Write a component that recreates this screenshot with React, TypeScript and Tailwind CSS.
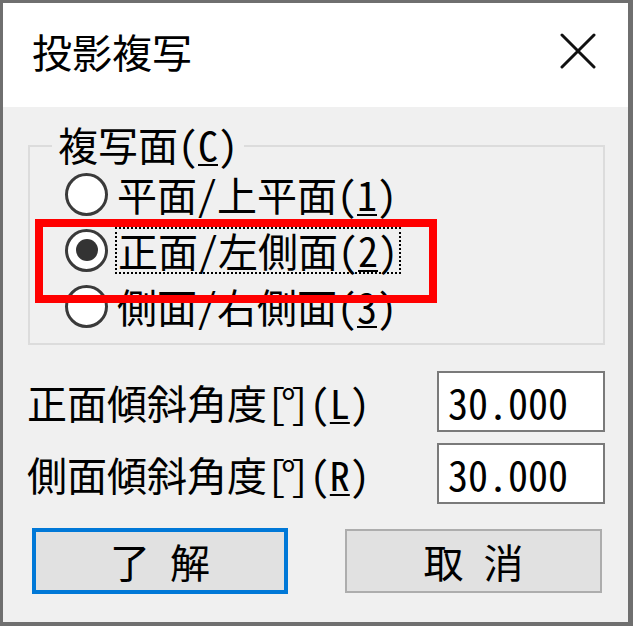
import React from "react";

const font = "font-['Noto_Sans_CJK_JP',sans-serif] [font-feature-settings:'hwid']";

function Radio({ checked }: { checked?: boolean }) {
    return (
        <span className="flex h-[43px] w-[43px] shrink-0 items-center justify-center rounded-full border-[3px] border-[#3a3a3a] bg-white">
            {checked && <span className="h-[22px] w-[22px] rounded-full bg-[#333333]" />}
        </span>
    );
}

function RadioRow({ label, keyChar, checked }: { label: string; keyChar: string; checked?: boolean }) {
    const text = (
        <>
            {label}(<span className="underline decoration-2 underline-offset-[3px]">{keyChar}</span>)
        </>
    );
    return (
        <div className="flex h-[56px] items-center pl-[35px]">
            <Radio checked={checked} />
            {checked ? (
                <span className="ml-[7px] border-2 border-dotted border-black px-[1px] leading-[43px]">{text}</span>
            ) : (
                <span className="ml-[9px] leading-[40px]">{text}</span>
            )}
        </div>
    );
}

function AngleRow({ label, keyChar, value }: { label: string; keyChar: string; value: string }) {
    return (
        <div className="flex h-[61px] items-center">
            <span className="leading-[40px]">
                {label}
                <span className="tracking-[-6px]">[°]</span>
                <span className="ml-[6px]">
                    (<span className="underline decoration-2 underline-offset-[3px]">{keyChar}</span>)
                </span>
            </span>
            <div className="ml-auto flex h-[61px] w-[168px] items-center border-2 border-[#7a7a7a] bg-white pl-[9px] leading-[40px]">
                {value}
            </div>
        </div>
    );
}

export default function App() {
    return (
        <div className={`relative flex h-[626px] w-[633px] flex-col border-t-[3px] border-r-[5px] border-b-[4px] border-l-[3px] border-[#6f6f6f] text-[40px] text-black ${font}`}>
            {/* title bar */}
            <div className="flex h-[104px] shrink-0 items-center bg-white pb-[8px] pl-[29px] pr-[32px]">
                <span className="leading-[40px]">投影複写</span>
                <svg className="ml-auto" width="36" height="36" viewBox="0 0 36 36">
                    <path d="M2 2 L34 34 M34 2 L2 34" stroke="#111" strokeWidth="3" strokeLinecap="round" />
                </svg>
            </div>

            <div className="flex flex-1 flex-col bg-[#f0f0f0]">
                <fieldset className="ml-[25px] mt-[19px] w-[577px] border-2 border-[#dcdcdc] pb-[9px]">
                    <legend className="relative -top-[2px] ml-[22px] px-[6px] leading-[40px]">
                        複写面(<span className="underline decoration-2 underline-offset-[3px]">C</span>)
                    </legend>
                    <RadioRow label="平面/上平面" keyChar="1" />
                    <RadioRow label="正面/左側面" keyChar="2" checked />
                    <RadioRow label="側面/右側面" keyChar="3" />
                </fieldset>

                <div className="mt-[26px] flex flex-col gap-[11px] pl-[24px] pr-[23px]">
                    <AngleRow label="正面傾斜角度" keyChar="L" value="30.000" />
                    <AngleRow label="側面傾斜角度" keyChar="R" value="30.000" />
                </div>

                <div className="mt-[24px] flex items-start pl-[29px]">
                    <button className="flex h-[66px] w-[256px] items-center justify-center border-4 border-[#0078d7] bg-[#e1e1e1] leading-[40px]">
                        了&nbsp;解
                    </button>
                    <button className="ml-[57px] mt-[1px] flex h-[64px] w-[257px] items-center justify-center border-2 border-[#adadad] bg-[#e1e1e1] leading-[40px]">
                        取&nbsp;消
                    </button>
                </div>
            </div>

            {/* annotation box */}
            <div className="absolute left-[32px] top-[216px] h-[84px] w-[402px] border-[8px] border-[#ff0000]" />
        </div>
    );
}
